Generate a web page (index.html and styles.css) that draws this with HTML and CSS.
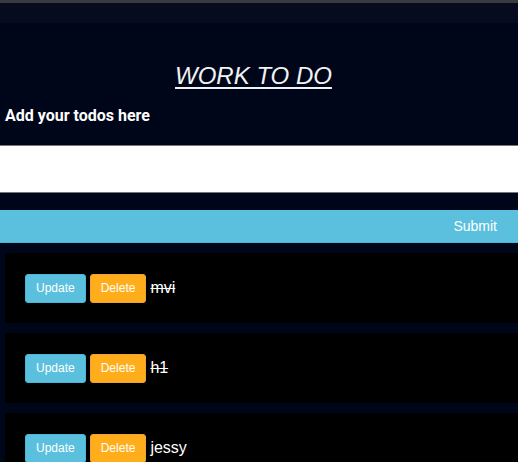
FILE: index.html
```html
<!DOCTYPE html>
<html lang="en">
<head>
<meta charset="utf-8">
<title>Work to do</title>
<link rel="stylesheet" href="styles.css">
</head>
<body>
<div class="topline"></div>
<div class="navband"></div>
<main class="app">
  <h1 class="title">WORK TO DO</h1>
  <h4 class="subtitle">Add your todos here</h4>
  <form class="todo-form">
    <input class="todo-input" type="text">
    <button class="submit-btn" type="button">Submit</button>
  </form>
  <ul class="todo-list">
    <li class="todo-item">
      <button class="btn btn-update" type="button">Update</button>
      <button class="btn btn-delete" type="button">Delete</button>
      <span class="todo-text done">mvi</span>
    </li>
    <li class="todo-item">
      <button class="btn btn-update" type="button">Update</button>
      <button class="btn btn-delete" type="button">Delete</button>
      <span class="todo-text done">h1</span>
    </li>
    <li class="todo-item">
      <button class="btn btn-update" type="button">Update</button>
      <button class="btn btn-delete" type="button">Delete</button>
      <span class="todo-text">jessy</span>
    </li>
  </ul>
</main>
</body>
</html>
```
FILE: styles.css
```css
html, body {
  margin: 0;
  padding: 0;
}
body {
  background: #00061a;
  font-family: "Liberation Sans", Arial, sans-serif;
  color: #fff;
  overflow: hidden;
}
.topline {
  height: 3px;
  background: #3a3b3d;
}
.navband {
  height: 20px;
  background: #060b1f;
}
.app {
  display: flex;
  flex-direction: column;
}
.title {
  margin: 39px 0 0;
  padding-right: 11px;
  font-size: 24px;
  line-height: 28px;
  font-weight: normal;
  font-style: italic;
  text-decoration: underline;
  text-decoration-thickness: 2px;
  text-underline-offset: 3px;
  text-align: center;
  color: #f2f2f2;
}
.subtitle {
  margin: 17px 0 0 5px;
  font-family: Roboto, "Liberation Sans", Arial, sans-serif;
  font-size: 16px;
  line-height: 18px;
  font-weight: bold;
  color: #fff;
}
.todo-form {
  display: flex;
  flex-direction: column;
  margin: 20px 0 0;
}
.todo-input {
  box-sizing: border-box;
  width: 100%;
  height: 48px;
  margin: 0;
  border: 0;
  border-top: 1px solid #767676;
  border-bottom: 1px solid #767676;
  background: #fff;
  padding: 0 8px;
  font-size: 16px;
}
.submit-btn {
  margin-top: 17px;
  height: 33px;
  border: 0;
  border-bottom: 1px solid #46b8da;
  background: #5bc0de;
  color: #fff;
  font-family: "Liberation Sans", Arial, sans-serif;
  font-size: 14px;
  text-align: right;
  padding: 0 21px 0 0;
}
.todo-list {
  list-style: none;
  margin: 10px 0 0;
  padding: 0;
  display: flex;
  flex-direction: column;
  gap: 10px;
}
.todo-item {
  box-sizing: border-box;
  height: 70px;
  margin-left: 5px;
  padding: 0 20px;
  background: #000;
  display: flex;
  align-items: center;
  gap: 4px;
}
.btn {
  box-sizing: border-box;
  height: 29px;
  padding: 0 10px;
  border-radius: 3px;
  font-family: "Liberation Sans", Arial, sans-serif;
  font-size: 12px;
  line-height: 17px;
  color: #fff;
  cursor: pointer;
}
.btn-update {
  background: #5bc0de;
  border: 1px solid #46b8da;
}
.btn-delete {
  background: #ffad1a;
  border: 1px solid #eea236;
}
.todo-text {
  font-size: 16px;
  color: #fff;
}
.todo-text.done {
  text-decoration: line-through;
}
```
